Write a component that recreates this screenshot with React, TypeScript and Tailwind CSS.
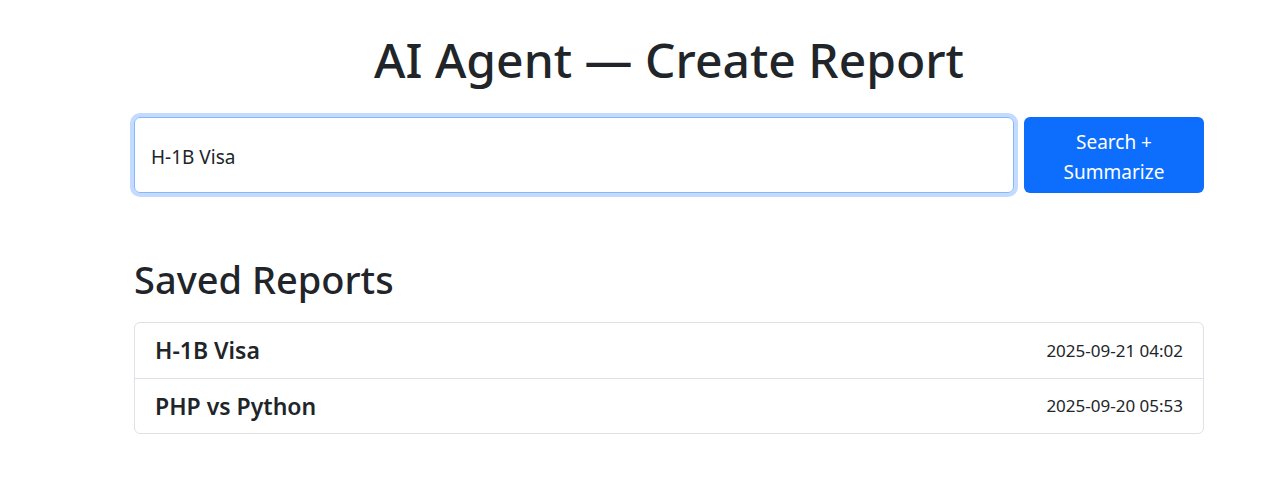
export default function App() {
  const reports = [
    { title: "H-1B Visa", date: "2025-09-21 04:02" },
    { title: "PHP vs Python", date: "2025-09-20 05:53" },
  ];

  return (
    <div className="min-h-screen bg-white text-[#212529] font-['Noto_Sans',sans-serif]">
      <div className="ml-[134px] w-[1070px]">
        <h1 className="pt-[31px] text-center text-[48px] leading-[58px] font-medium">
          AI Agent — Create Report
        </h1>

        <div className="mt-[28px] flex gap-[10px]">
          <input
            defaultValue="H-1B Visa"
            className="flex-1 rounded-[6px] border border-[#86b7fe] px-4 pt-[4px] text-[19px] text-[#212529] outline-none ring-4 ring-[#c2dbfe]"
          />
          <button className="w-[180px] rounded-[6px] bg-[#0d6efd] pt-[10px] pb-[6px] text-[19px] leading-[30px] text-white">
            Search +<br />
            Summarize
          </button>
        </div>

        <h2 className="mt-[63px] text-[38px] leading-[46px] font-medium">Saved Reports</h2>

        <ul className="mt-[20px] rounded-[6px] border border-[#dee2e6]">
          {reports.map((r, i) => (
            <li
              key={r.title}
              className={
                "flex h-[55px] items-center justify-between px-5 " +
                (i > 0 ? "border-t border-[#dee2e6]" : "")
              }
            >
              <span className="text-[23px] font-semibold">{r.title}</span>
              <span className="text-[17px]">{r.date}</span>
            </li>
          ))}
        </ul>
      </div>
    </div>
  );
}
